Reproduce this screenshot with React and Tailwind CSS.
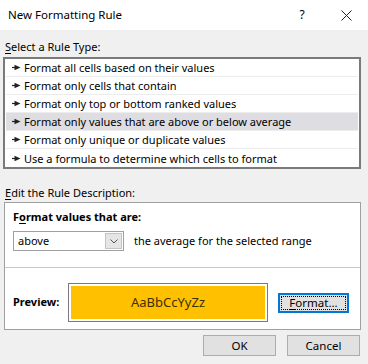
import React from 'react';

const rules = [
  'Format all cells based on their values',
  'Format only cells that contain',
  'Format only top or bottom ranked values',
  'Format only values that are above or below average',
  'Format only unique or duplicate values',
  'Use a formula to determine which cells to format',
];

const Pointer = () => (
  <svg width="9" height="7" viewBox="0 0 9 7" className="shrink-0">
    <path d="M0 3.5h4" stroke="#222" strokeWidth="1.2" />
    <path d="M2.5 0.8L8.5 3.5L2.5 6.2z" fill="#222" />
  </svg>
);

const Btn = ({ children, className = '' }) => (
  <button
    className={`h-[21px] w-[73px] bg-[#e1e1e1] border border-[#adadad] text-[11.5px] text-black ${className}`}
  >
    {children}
  </button>
);

export default function App() {
  const selected = 3;
  return (
    <div
      className="w-[368px] h-[364px] bg-[#f0f0f0] text-[11px] text-black overflow-hidden"
      style={{ fontFamily: '"Noto Sans", "Open Sans", sans-serif' }}
    >
      {/* title bar */}
      <div className="h-[30px] bg-white flex items-center pl-[8px] pr-[16px]">
        <span className="text-[11.5px] flex-1">New Formatting Rule</span>
        <span className="w-[10px] text-center mr-[34px] text-[12px]">?</span>
        <svg width="11" height="11" viewBox="0 0 11 11">
          <path d="M0.5 0.5L10.5 10.5M10.5 0.5L0.5 10.5" stroke="#222" strokeWidth="1" />
        </svg>
      </div>

      <div className="pl-[3px] pr-[7px]">
        <div className="mt-[9px] h-[16px] leading-[16px] ml-[2px]">
          <span className="underline underline-offset-2">S</span>elect a Rule Type:
        </div>

        {/* rule list */}
        <div className="mt-[2px] bg-white border-2 border-[#7a7a7a]">
          {rules.map((r, i) => (
            <div
              key={r}
              className={`h-[18px] flex items-center gap-[3px] pl-[6px] mx-[1px] ${
                i < rules.length - 1 ? 'border-b border-[#ececec]' : ''
              } ${i === selected ? 'bg-[#dddde2]' : ''}`}
            >
              <Pointer />
              <span className="leading-none">{r}</span>
            </div>
          ))}
        </div>

        <div className="mt-[16px] h-[16px] leading-[16px] ml-[2px]">
          <span className="underline underline-offset-2">E</span>dit the Rule Description:
        </div>

        {/* description box */}
        <div className="mt-[1px] ml-[1px] bg-white border border-[#a0a0a0]">
          <div className="pl-[8px] pt-[6px] pb-[16px]">
            <div className="h-[16px] leading-[16px] font-bold">
              F<span className="underline underline-offset-2">o</span>rmat values that are:
            </div>
            <div className="mt-[6px] flex items-center">
              <div className="w-[111px] h-[20px] border border-[#a0a0a0] bg-white flex items-center pl-[4px] pr-[1px]">
                <span className="flex-1">above</span>
                <div className="w-[17px] h-[16px] bg-[#e5e5e5] border border-[#c4c4c4] flex items-center justify-center">
                  <svg width="8" height="5" viewBox="0 0 8 5">
                    <path d="M0.5 0.5L4 4L7.5 0.5" stroke="#555" strokeWidth="1" fill="none" />
                  </svg>
                </div>
              </div>
              <span className="ml-[10px]">the average for the selected range</span>
            </div>
          </div>
          <div className="border-t border-[#c8c8c8] pl-[8px] pt-[15px] pb-[7px] flex items-center">
            <span className="font-bold w-[55px]">Preview:</span>
            <div className="w-[200px] h-[39px] border border-[#7a7a7a] p-[2px] bg-white">
              <div className="w-full h-full bg-[#ffc000] flex items-center justify-center text-[13px] text-[#3d2f05]">
                AaBbCcYyZz
              </div>
            </div>
            <button className="ml-[10px] h-[20px] w-[71px] bg-[#e1e1e1] border-2 border-[#0078d7] p-[1px] text-[11.5px]">
              <div className="w-full h-full border border-dotted border-black flex items-center justify-center leading-none">
                <span className="underline underline-offset-2">F</span>ormat...
              </div>
            </button>
          </div>
        </div>

        <div className="mt-[5px] flex justify-end gap-[11px] pr-[1px]">
          <Btn>OK</Btn>
          <Btn>Cancel</Btn>
        </div>
      </div>
    </div>
  );
}
